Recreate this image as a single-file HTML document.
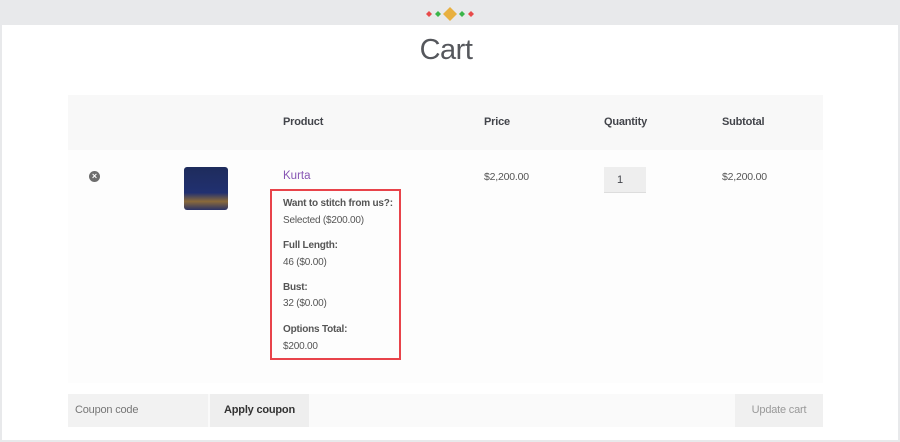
<!DOCTYPE html>
<html><head><meta charset="utf-8"><style>
body{margin:0;width:900px;height:442px;background:#e8e9eb;font-family:"Liberation Sans",sans-serif;position:relative;overflow:hidden}
.page{position:absolute;left:2px;top:25px;width:896px;height:415px;background:#fff}
.abs{position:absolute}
h1{position:absolute;left:0;width:892px;top:34px;margin:0;text-align:center;font-weight:normal;font-size:29px;color:#55575c;letter-spacing:-0.5px}
.hd{left:68px;top:95px;width:755px;height:55px;background:#f8f8f8}
.bd{left:68px;top:150px;width:755px;height:233px;background:#fdfdfd}
.th{top:116px;font-size:11px;font-weight:bold;color:#43454b;letter-spacing:-0.2px}
.t{font-size:10px;color:#555;letter-spacing:-0.2px}
.b{font-weight:bold;color:#555}
</style></head><body>
<svg class="abs" style="left:424px;top:7px" width="52" height="14">
<path d="M2 7L5 4 8 7 5 10Z" fill="#e84a4a"/><path d="M11 7L14 4 17 7 14 10Z" fill="#3bb54a"/>
<path d="M19 7L26 0 33 7 26 14Z" fill="#e8b040"/>
<path d="M35 7L38 4 41 7 38 10Z" fill="#3bb54a"/><path d="M44 7L47 4 50 7 47 10Z" fill="#e84a4a"/></svg>
<div class="page"></div>
<h1>Cart</h1>
<div class="abs hd"></div><div class="abs bd"></div>
<div class="abs th" style="left:283px">Product</div>
<div class="abs th" style="left:484px">Price</div>
<div class="abs th" style="left:604px">Quantity</div>
<div class="abs th" style="left:722px">Subtotal</div>
<div class="abs" style="left:89px;top:171px;width:11px;height:11px;border-radius:50%;background:#6d6d6d;color:#fff;font-size:9px;line-height:11px;text-align:center;font-weight:bold">×</div>
<div class="abs" style="left:184px;top:167px;width:44px;height:43px;border-radius:3px;background:linear-gradient(180deg,#1e2c5c 0%,#213070 60%,#8a6a3a 80%,#2a3266 100%)"></div>
<div class="abs" style="left:283px;top:170px;font-size:11.5px;color:#8756b4">Kurta</div>
<div class="abs" style="left:270px;top:189px;width:127px;height:167px;border:2px solid #e8434a"></div>
<div class="abs t b" style="left:283px;top:198px">Want to stitch from us?:</div>
<div class="abs t" style="left:283px;top:215px">Selected ($200.00)</div>
<div class="abs t b" style="left:283px;top:240px">Full Length:</div>
<div class="abs t" style="left:283px;top:257px">46 ($0.00)</div>
<div class="abs t b" style="left:283px;top:282px">Bust:</div>
<div class="abs t" style="left:283px;top:298px">32 ($0.00)</div>
<div class="abs t b" style="left:283px;top:324px">Options Total:</div>
<div class="abs t" style="left:283px;top:341px">$200.00</div>
<div class="abs t" style="left:484px;top:171px;font-size:10.5px">$2,200.00</div>
<div class="abs t" style="left:722px;top:171px;font-size:10.5px">$2,200.00</div>
<div class="abs" style="left:604px;top:167px;width:42px;height:26px;background:#eeeeee;border-bottom:1px solid #ddd;font-size:11px;color:#43454b;line-height:27px;padding-left:13px;box-sizing:border-box">1</div>
<div class="abs" style="left:68px;top:394px;width:755px;height:33px;background:#fafafa"></div>
<div class="abs" style="left:68px;top:394px;width:140px;height:33px;background:#f2f2f2;font-size:11px;color:#777;line-height:33px;padding-left:7px;box-sizing:border-box;letter-spacing:-0.2px">Coupon code</div>
<div class="abs" style="left:210px;top:394px;width:99px;height:33px;background:#eeeeee;font-size:11px;font-weight:bold;color:#333;line-height:33px;text-align:center;letter-spacing:-0.2px">Apply coupon</div>
<div class="abs" style="left:735px;top:394px;width:88px;height:33px;background:#f0f0f0;font-size:11px;color:#999;line-height:33px;text-align:center;letter-spacing:-0.2px">Update cart</div>
</body></html>
